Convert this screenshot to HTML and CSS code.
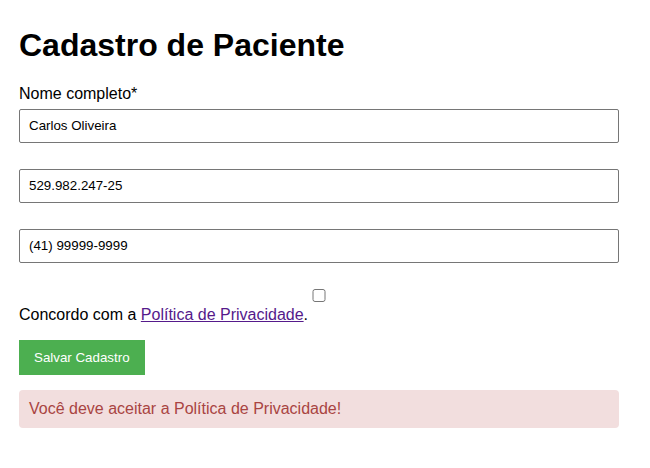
FILE: index.html
```html
<!DOCTYPE html>
<html lang="pt-BR">
<head>
<meta charset="utf-8">
<title>Cadastro de Paciente</title>
<link rel="stylesheet" href="styles.css">
</head>
<body>
<h1 class="title">Cadastro de Paciente</h1>
<form class="form">
  <div class="group">
    <label class="label" for="nome">Nome completo*</label>
    <input class="field" id="nome" type="text" value="Carlos Oliveira">
  </div>
  <div class="group">
    <input class="field" type="text" value="529.982.247-25">
  </div>
  <div class="group">
    <input class="field" type="text" value="(41) 99999-9999">
  </div>
  <div class="consent">
    <input class="check" type="checkbox" id="aceite">
    <label for="aceite">Concordo com a <a class="link" href="#">Política de Privacidade</a>.</label>
  </div>
  <button class="btn" type="button">Salvar Cadastro</button>
  <div class="alert">Você deve aceitar a Política de Privacidade!</div>
</form>
</body>
</html>
```
FILE: styles.css
```css
body {
  margin: 0;
  padding: 27px 19px 20px;
  font-family: "Liberation Sans", Arial, sans-serif;
  font-size: 16px;
  line-height: 18px;
  color: #000;
  background: #fff;
}
.title {
  font-size: 32px;
  line-height: 37px;
  font-weight: bold;
  margin: 0 0 21px;
}
.form {
  width: 600px;
}
.group {
  margin-bottom: 26px;
}
.label {
  display: block;
  margin-bottom: 6px;
}
.field {
  display: block;
  width: 100%;
  box-sizing: border-box;
  padding: 9px;
  font-family: "Liberation Sans", Arial, sans-serif;
  font-size: 13.33px;
  line-height: 14px;
  border: 1px solid #767676;
  border-radius: 2px;
  margin: 0;
}
.consent {
  margin-bottom: 16px;
}
.check {
  display: block;
  width: 100%;
  height: 13px;
  margin: 0 0 4px;
}
.link {
  color: #551a8b;
}
.btn {
  display: block;
  background: #4caf50;
  color: #fff;
  border: none;
  padding: 10px 15px;
  font-family: "Liberation Sans", Arial, sans-serif;
  font-size: 13.33px;
  line-height: 15px;
  cursor: pointer;
}
.alert {
  margin-top: 15px;
  padding: 10px;
  background: #f2dede;
  color: #a94442;
  border-radius: 4px;
}
```
